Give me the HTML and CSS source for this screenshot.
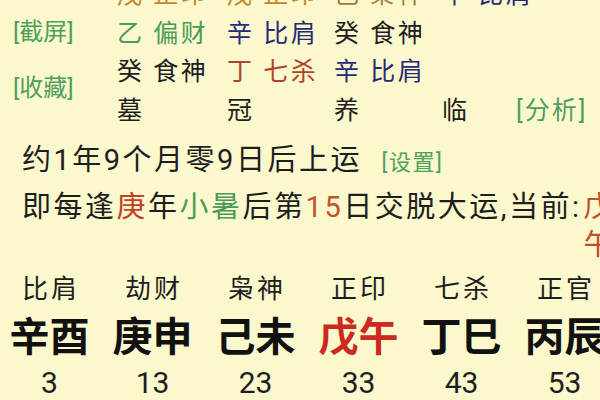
FILE: index.html
```html
<!DOCTYPE html>
<html lang="zh">
<head>
<meta charset="utf-8">
<link rel="stylesheet" href="styles.css">
</head>
<body>
<div class="page">
  <section class="top">
    <div class="labels">
      <div class="link">[截屏]</div>
      <div class="link">[收藏]</div>
    </div>
    <div class="pillars">
      <span class="orange">戊 正印</span><span class="orange">戊 正印</span><span class="brown">己 枭神</span><span class="navy">辛 比肩</span><span></span>
      <span class="green">乙 偏财</span><span class="navy">辛 比肩</span><span>癸 食神</span><span></span><span></span>
      <span>癸 食神</span><span class="rust">丁 七杀</span><span class="navy">辛 比肩</span><span></span><span></span>
      <span>墓</span><span>冠</span><span>养</span><span>临</span><span class="link analyse">[分析]</span>
    </div>
  </section>
  <section class="info">
    <div class="line1">约1年9个月零9日后上运 <span class="link small">[设置]</span></div>
    <div class="line2">
      <span class="main">即每逢<span class="red">庚</span>年<span class="green">小暑</span>后第<span class="red2">15</span>日交脱大运,当前: </span>
      <span class="current">戊午</span>
    </div>
  </section>
  <section class="luck">
    <div class="col"><div class="god">比肩</div><div class="gz">辛酉</div><div class="age">3</div></div>
    <div class="col"><div class="god">劫财</div><div class="gz">庚申</div><div class="age">13</div></div>
    <div class="col"><div class="god">枭神</div><div class="gz">己未</div><div class="age">23</div></div>
    <div class="col"><div class="god">正印</div><div class="gz now">戊午</div><div class="age">33</div></div>
    <div class="col"><div class="god">七杀</div><div class="gz">丁巳</div><div class="age">43</div></div>
    <div class="col"><div class="god">正官</div><div class="gz">丙辰</div><div class="age">53</div></div>
  </section>
</div>
</body>
</html>
```

FILE: styles.css
```css
html, body {
  margin: 0;
  padding: 0;
  overflow: hidden;
  width: 600px;
  height: 400px;
  background: #faf8cc;
}
.page {
  font-family: Roboto, "Noto Sans CJK SC", sans-serif;
  color: #1e1e1e;
  width: 600px;
  height: 400px;
  overflow: hidden;
}
.top {
  display: flex;
  height: 130px;
}
.labels {
  width: 104px;
  padding-left: 13px;
  padding-top: 4px;
  font-size: 24px;
  line-height: 56px;
}
.link {
  color: #4f9e5e;
}
.pillars {
  display: grid;
  grid-template-columns: 110px 107px 108px 74px 1fr;
  margin-top: -24px;
  font-size: 25px;
  line-height: 38.5px;
  letter-spacing: 2.5px;
  white-space: nowrap;
}
.analyse {
  font-size: 25px;
  letter-spacing: 2px;
}
.orange { color: #c4862c; }
.brown { color: #a27a36; }
.navy { color: #252a78; }
.green { color: #4a9a58; }
.rust { color: #b0442a; }
.red { color: #c0402a; }
.red2 { color: #c4502c; }

.info {
  padding-left: 22px;
  font-size: 29px;
  letter-spacing: 2.5px;
  white-space: nowrap;
}
.line1 {
  margin-top: 8px;
  line-height: 45px;
}
.small {
  font-size: 22px;
  letter-spacing: 1.5px;
  margin-left: 10px;
}
.line2 {
  display: flex;
  margin-top: 3px;
  line-height: 38px;
}
.current {
  width: 30px;
  margin-left: 2px;
  white-space: normal;
  color: #c0502a;
}
.luck {
  display: grid;
  grid-template-columns: repeat(6, 103px);
  margin-left: -2px;
  margin-top: 7px;
  text-align: center;
}
.god {
  font-size: 26px;
  line-height: 36px;
  letter-spacing: 3px;
  padding-left: 3px;
}
.gz {
  font-size: 40px;
  font-weight: 700;
  line-height: 62px;
  color: #111;
}
.gz.now {
  color: #cc2a20;
}
.age {
  font-size: 30px;
  line-height: 28px;
}
```
